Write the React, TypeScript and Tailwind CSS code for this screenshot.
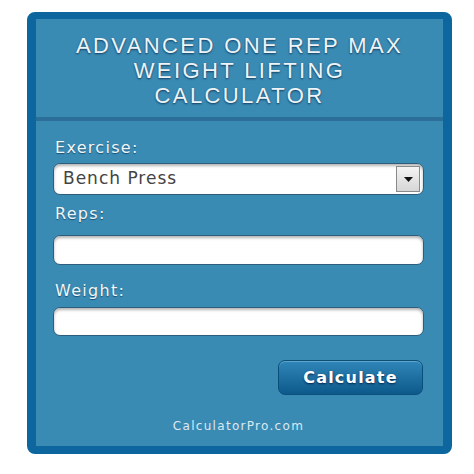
const fields = [
  { id: "reps", label: "Reps:", labelGap: "mt-[9px]", inputGap: "mt-[11px]", height: "h-[30px]" },
  { id: "weight", label: "Weight:", labelGap: "mt-[16px]", inputGap: "mt-[6px]", height: "h-[29px]" },
];

function Label({ children, className }: { children: string; className?: string }) {
  return (
    <div
      className={`ml-[2px] h-5 text-[16px] leading-5 tracking-[1.3px] text-[#f1f6fa] [text-shadow:0_1px_1px_rgba(0,40,70,0.6)] ${className ?? ""}`}
    >
      {children}
    </div>
  );
}

export default function App() {
  return (
    <div className="min-h-[474px] bg-white pt-[12px] font-['DejaVu_Sans',sans-serif]">
      <div className="ml-[27px] w-[425px] rounded-[8px] border-x-[9px] border-t-[7px] border-b-[8px] border-[#0d669d] bg-[#3a8bb4]">
        {/* title */}
        <div className="border-b-4 border-[#2a6e99] pt-[14px] pb-[9px] text-center font-['Liberation_Sans',sans-serif] text-[22px] leading-[25px] tracking-[2.4px] text-[#eef4f8] [text-shadow:0_1px_2px_rgba(0,30,60,0.75)]">
          <div>ADVANCED ONE REP MAX</div>
          <div>WEIGHT LIFTING</div>
          <div>CALCULATOR</div>
        </div>

        <div className="pl-[17px] pr-[19px] pt-[17px] pb-[12px]">
          <Label>Exercise:</Label>
          <div className="mt-[5px] flex h-[32px] items-center justify-between rounded-[7px] border border-[#2d5d7a] bg-white pl-[9px] pr-[3px] shadow-[inset_0_2px_3px_rgba(0,0,0,0.3)]">
            <span className="text-[17px] tracking-[1px] text-[#444]">Bench Press</span>
            <span className="flex h-[26px] w-[24px] items-center justify-center border border-[#8a8a8a] bg-gradient-to-b from-[#f4f4f4] to-[#d6d6d6]">
              <svg width="9" height="5" viewBox="0 0 9 5">
                <path d="M0 0h9L4.5 5z" fill="#111" />
              </svg>
            </span>
          </div>

          {fields.map((f) => (
            <div key={f.id}>
              <Label className={f.labelGap}>{f.label}</Label>
              <div
                className={`${f.inputGap} ${f.height} rounded-[7px] border border-[#2d5d7a] bg-white shadow-[inset_0_2px_3px_rgba(0,0,0,0.3)]`}
              />
            </div>
          ))}

          <div className="mt-[24px] flex justify-end pr-[1px]">
            <button className="h-[35px] w-[145px] rounded-[7px] border border-[#0a4f7a] bg-gradient-to-b from-[#2f86b8] to-[#0c5a8c] text-[16px] font-bold tracking-[1.2px] text-white shadow-[inset_0_1px_0_rgba(255,255,255,0.25)] [text-shadow:0_1px_2px_rgba(0,20,50,0.8)]">
              Calculate
            </button>
          </div>

          <div className="mt-[23px] text-center text-[12px] leading-4 tracking-[1.3px] text-[#dbe9f1]">
            CalculatorPro.com
          </div>
        </div>
      </div>
    </div>
  );
}
